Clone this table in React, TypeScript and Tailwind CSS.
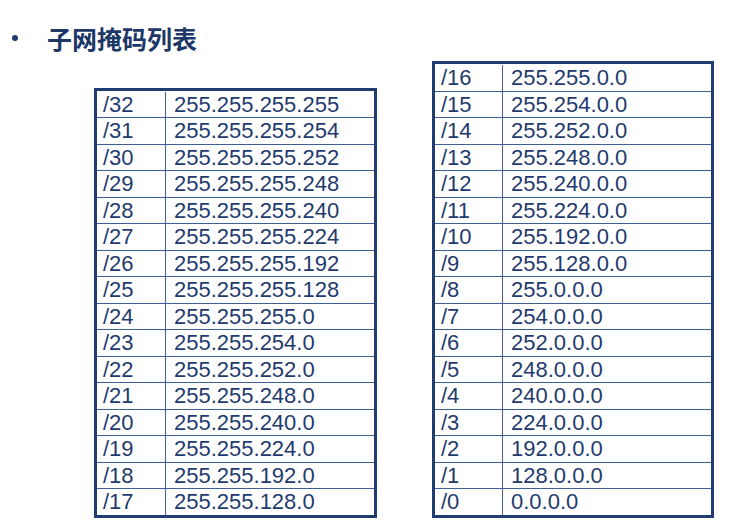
import React from 'react';

const left: [string, string][] = [
  ['/32', '255.255.255.255'],
  ['/31', '255.255.255.254'],
  ['/30', '255.255.255.252'],
  ['/29', '255.255.255.248'],
  ['/28', '255.255.255.240'],
  ['/27', '255.255.255.224'],
  ['/26', '255.255.255.192'],
  ['/25', '255.255.255.128'],
  ['/24', '255.255.255.0'],
  ['/23', '255.255.254.0'],
  ['/22', '255.255.252.0'],
  ['/21', '255.255.248.0'],
  ['/20', '255.255.240.0'],
  ['/19', '255.255.224.0'],
  ['/18', '255.255.192.0'],
  ['/17', '255.255.128.0'],
];

const right: [string, string][] = [
  ['/16', '255.255.0.0'],
  ['/15', '255.254.0.0'],
  ['/14', '255.252.0.0'],
  ['/13', '255.248.0.0'],
  ['/12', '255.240.0.0'],
  ['/11', '255.224.0.0'],
  ['/10', '255.192.0.0'],
  ['/9', '255.128.0.0'],
  ['/8', '255.0.0.0'],
  ['/7', '254.0.0.0'],
  ['/6', '252.0.0.0'],
  ['/5', '248.0.0.0'],
  ['/4', '240.0.0.0'],
  ['/3', '224.0.0.0'],
  ['/2', '192.0.0.0'],
  ['/1', '128.0.0.0'],
  ['/0', '0.0.0.0'],
];

const MaskTable: React.FC<{ rows: [string, string][]; width: string; firstCol: string }> = ({ rows, width, firstCol }) => (
  <div className={`flex flex-col border-[3px] border-[#1f3d70] ${width}`}>
    {rows.map(([prefix, mask], i) => (
      <div
        key={prefix}
        className={`flex h-[26.5px] leading-[25.5px] border-t ${i > 0 ? 'border-[#3d5f92]' : 'border-transparent'}`}
      >
        <div className={`${firstCol} shrink-0 border-r border-[#3d5f92] pl-[6px]`}>{prefix}</div>
        <div className="flex-1 pl-[8px]">{mask}</div>
      </div>
    ))}
  </div>
);

export default function App() {
  return (
    <div
      className="w-[733px] h-[530px] bg-white text-[#1f3b6e] pt-[24px]"
      style={{ fontFamily: '"Liberation Sans", Arial, sans-serif' }}
    >
      {/* Title */}
      <div className="flex items-center h-[28px]">
        <div className="ml-[12px] w-[6px] h-[6px] rounded-full bg-[#1f3b6e]" />
        <h1
          className="ml-[29px] text-[25px] leading-[28px] font-bold text-[#1d3866]"
          style={{ fontFamily: '"Noto Sans CJK SC", sans-serif' }}
        >
          子网掩码列表
        </h1>
      </div>

      {/* Tables */}
      <div className="flex items-end mt-[9px] pl-[94px] gap-[55px] text-[22px]">
        <MaskTable rows={left} width="w-[283px]" firstCol="w-[69px]" />
        <MaskTable rows={right} width="w-[282px]" firstCol="w-[68px]" />
      </div>
    </div>
  );
}
